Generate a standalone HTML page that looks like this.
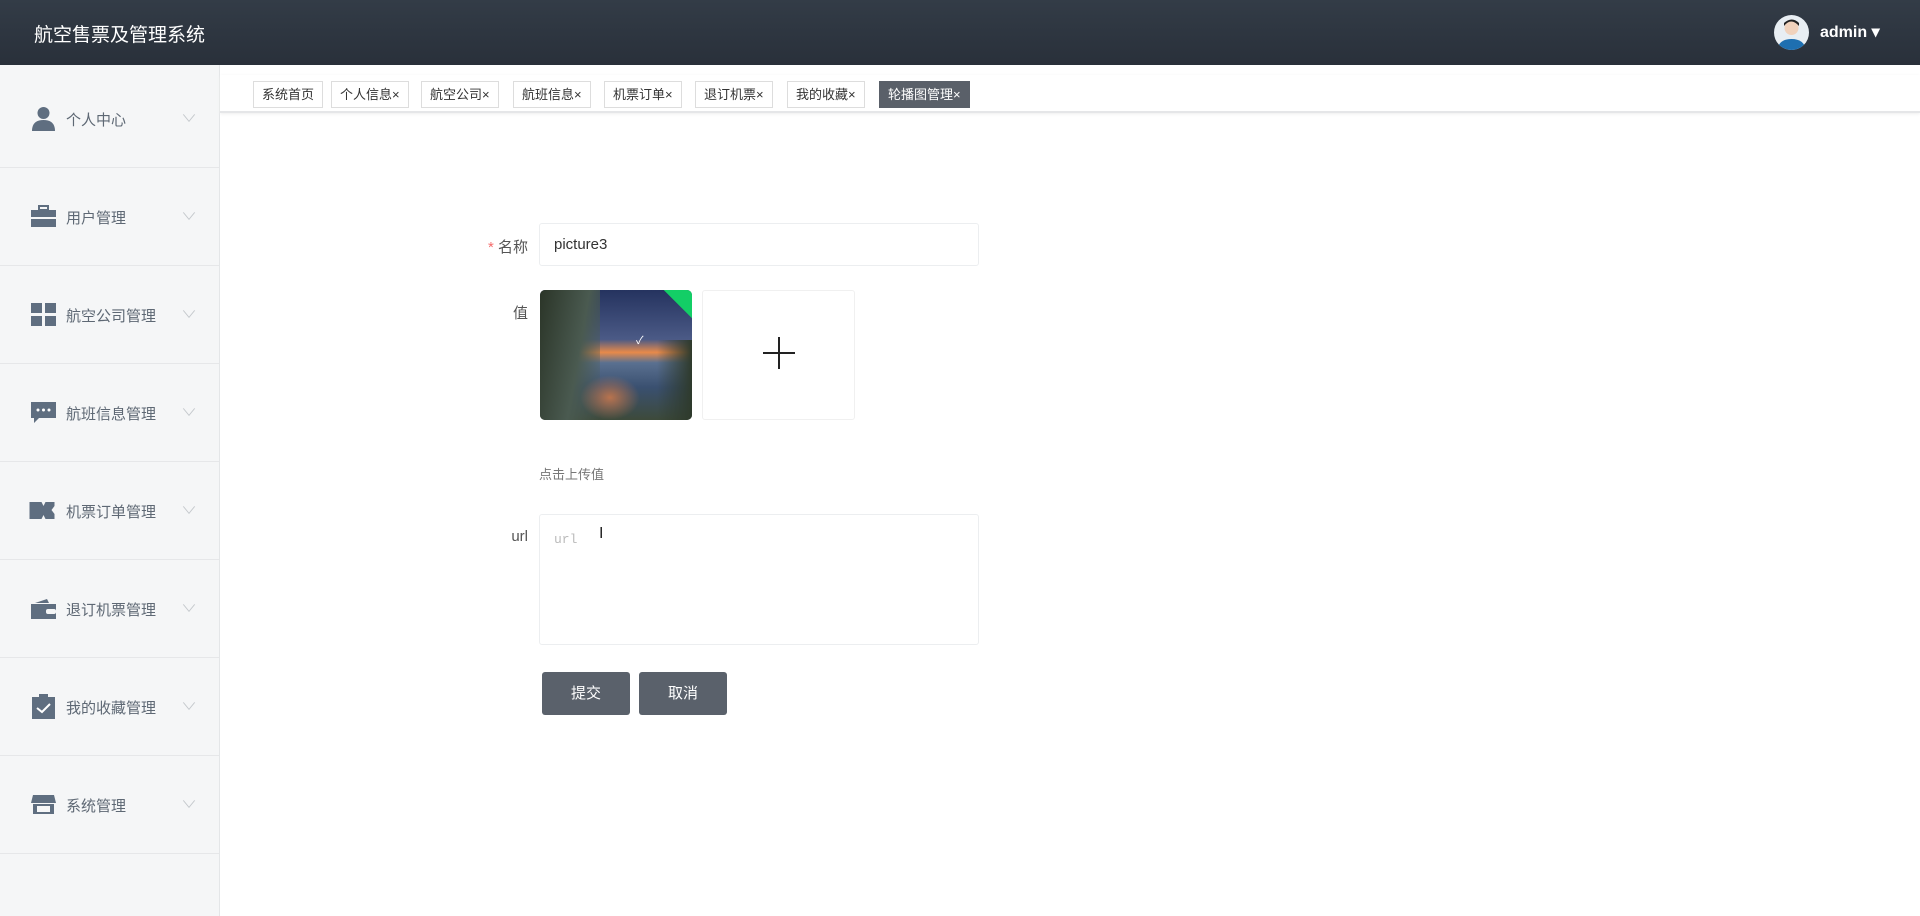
<!DOCTYPE html>
<html><head><meta charset="utf-8"><style>
*{box-sizing:border-box;margin:0;padding:0}
body{width:1920px;height:916px;overflow:hidden;background:#fff;font-family:"Liberation Sans","Noto Sans CJK SC",sans-serif;position:relative}
.hdr{position:absolute;left:0;top:0;width:1920px;height:65px;background:linear-gradient(#333c47,#29303a);color:#fff}
.hdr .t{position:absolute;left:34px;top:20px;font-size:19px}
.av{position:absolute;left:1774px;top:15px;width:35px;height:35px;border-radius:50%;background:#e8eef3;overflow:hidden}
.adm{position:absolute;left:1820px;top:22px;font-size:16px;font-weight:bold}
.side{position:absolute;left:0;top:65px;width:220px;height:851px;background:#f5f6f7;border-right:1px solid #e4e6e8}
.it{height:98px;border-bottom:1px solid #e6e7e9;position:relative;color:#5e6874;font-size:15px}
.it .ic{position:absolute;left:31px;top:36px;width:25px;height:25px}
.it .tx{position:absolute;left:66px;top:39px}
.it .ar{position:absolute;left:184px;top:40px;color:#c4c8cc;font-size:10px;transform:scaleX(1.6)}
.tabs{position:absolute;left:220px;top:75px;width:1700px;height:38px;border-bottom:2px solid #e5e6e8;box-shadow:0 1px 3px #eee}
.tab{position:absolute;top:6px;height:27px;border:1px solid #ddd;font-size:13px;color:#333;line-height:25px;padding:0 8px;background:#fff}
.tab.a{background:#5a6069;color:#fff;border-color:#5a6069}
.lbl{position:absolute;font-size:15px;color:#555;text-align:right;width:80px}
.inp{position:absolute;border:1px solid #eceef0;border-radius:3px;background:#fff}
.btn{position:absolute;top:672px;width:88px;height:43px;background:#5a616b;color:#fff;border-radius:3px;font-size:15px;text-align:center;line-height:43px}
</style></head><body>
<div class="hdr"><div class="t">航空售票及管理系统</div>
<div class="av"><svg width="35" height="35"><circle cx="17.5" cy="13" r="7" fill="#f1d2bc"/><path d="M10 11q7-9 15 0v-3q-7-7-15 0z" fill="#222"/><path d="M3 35q2-11 14.5-11T32 35z" fill="#1e6fb0"/></svg></div>
<div class="adm">admin ▾</div></div>
<div class="side">
<div style="height:5px"></div>
<div class="it"><svg class="ic" viewBox="0 0 25 25"><circle cx="12.5" cy="7" r="6" fill="#5f6e80"/><path d="M1 25q0-11 11.5-11T24 25z" fill="#5f6e80"/></svg><span class="tx">个人中心</span><span class="ar">∨</span></div>
<div class="it"><svg class="ic" viewBox="0 0 25 25"><rect x="8" y="2" width="9" height="4" fill="none" stroke="#5f6e80" stroke-width="2"/><rect x="0" y="6" width="25" height="7" fill="#5f6e80"/><rect x="0" y="15" width="25" height="8" fill="#5f6e80"/></svg><span class="tx">用户管理</span><span class="ar">∨</span></div>
<div class="it"><svg class="ic" viewBox="0 0 25 25" fill="#5f6e80"><rect x="0" y="1" width="11" height="10"/><rect x="14" y="1" width="11" height="10"/><rect x="0" y="14" width="11" height="10"/><rect x="14" y="14" width="11" height="10"/></svg><span class="tx">航空公司管理</span><span class="ar">∨</span></div>
<div class="it"><svg class="ic" viewBox="0 0 25 25"><path d="M0 2h25v16H8l-5 5v-5H0z" fill="#5f6e80"/><circle cx="7" cy="10" r="1.5" fill="#fff"/><circle cx="12.5" cy="10" r="1.5" fill="#fff"/><circle cx="18" cy="10" r="1.5" fill="#fff"/></svg><span class="tx">航班信息管理</span><span class="ar">∨</span></div>
<div class="it"><svg class="ic" viewBox="0 0 25 25" style="left:28px;width:28px"><path d="M0 4h12l2 4 2-4h9v4l-3 4 3 4v5h-9l-2-4-2 4H0z" fill="#5f6e80"/></svg><span class="tx">机票订单管理</span><span class="ar">∨</span></div>
<div class="it"><svg class="ic" viewBox="0 0 25 25"><path d="M4 7l12-4 2 4z" fill="#5f6e80"/><rect x="0" y="8" width="25" height="15" fill="#5f6e80"/><rect x="15" y="13" width="10" height="5" rx="2" fill="#f5f6f7"/></svg><span class="tx">退订机票管理</span><span class="ar">∨</span></div>
<div class="it"><svg class="ic" viewBox="0 0 25 25"><rect x="8" y="0" width="9" height="4" fill="#5f6e80"/><rect x="1" y="3" width="23" height="22" fill="#5f6e80"/><path d="M6 14l5 4 8-8" stroke="#fff" stroke-width="2" fill="none"/></svg><span class="tx">我的收藏管理</span><span class="ar">∨</span></div>
<div class="it"><svg class="ic" viewBox="0 0 25 25"><path d="M2 3h21l2 8H0z" fill="#5f6e80"/><rect x="2" y="12" width="21" height="10" fill="#5f6e80"/><rect x="6" y="14" width="13" height="6" fill="#f5f6f7"/></svg><span class="tx">系统管理</span><span class="ar">∨</span></div>
</div>
<div class="tabs">
<div class="tab" style="left:33px">系统首页</div>
<div class="tab" style="left:111px">个人信息×</div>
<div class="tab" style="left:201px">航空公司×</div>
<div class="tab" style="left:293px">航班信息×</div>
<div class="tab" style="left:384px">机票订单×</div>
<div class="tab" style="left:475px">退订机票×</div>
<div class="tab" style="left:567px">我的收藏×</div>
<div class="tab a" style="left:659px">轮播图管理×</div>
</div>
<div class="lbl" style="left:448px;top:236px"><span style="color:#f56c6c">*</span> 名称</div>
<div class="inp" style="left:539px;top:223px;width:440px;height:43px;font-size:15px;color:#333;padding:12px 0 0 14px">picture3</div>
<div class="lbl" style="left:448px;top:302px">值</div>
<div style="position:absolute;left:540px;top:290px;width:152px;height:130px;border-radius:5px;overflow:hidden;background:linear-gradient(#25335f 0%,#4b5a86 38%,#e88a4a 48%,#5a7090 56%,#3a5070 75%,#3d4a3a 100%)">
<div style="position:absolute;left:0;top:0;width:60px;height:130px;background:linear-gradient(100deg,#2b3528,#4a5a50 60%,transparent)"></div>
<div style="position:absolute;right:0;top:50px;width:35px;height:80px;background:linear-gradient(270deg,#2e3a2c,transparent)"></div>
<div style="position:absolute;left:40px;top:85px;width:60px;height:45px;background:radial-gradient(#b8734e,transparent 70%)"></div>
<div style="position:absolute;right:-20px;top:-20px;width:40px;height:40px;background:#13ce66;transform:rotate(45deg)"></div>
<div style="position:absolute;left:96px;top:42px;color:#fff;font-size:11px">✓</div></div>
<div class="inp" style="left:702px;top:290px;width:153px;height:130px;border-color:#f0f0f0"><svg width="153" height="130"><path d="M76 46v32M60 62h32" stroke="#222" stroke-width="2"/></svg></div>
<div style="position:absolute;left:539px;top:464px;font-size:13px;color:#777">点击上传值</div>
<div class="lbl" style="left:448px;top:528px">url</div>
<div class="inp" style="left:539px;top:514px;width:440px;height:131px;padding:17px 0 0 14px;font-family:'Liberation Mono',monospace;font-size:13px;color:#bbb">url</div>
<div style="position:absolute;left:599px;top:525px;font-size:16px;color:#222">I</div>
<div class="btn" style="left:542px">提交</div>
<div class="btn" style="left:639px">取消</div>
</body></html>
